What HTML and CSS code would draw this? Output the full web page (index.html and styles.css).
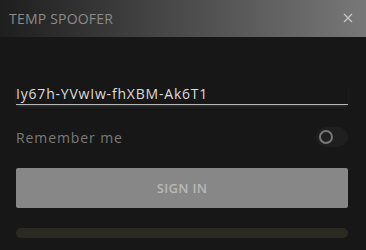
FILE: index.html
```html
<!DOCTYPE html>
<html>
<head>
<meta charset="utf-8">
<link rel="stylesheet" href="styles.css">
</head>
<body>
<div class="window">
  <div class="titlebar">
    <span class="title">TEMP SPOOFER</span>
    <svg class="close" width="10" height="10" viewBox="0 0 10 10"><path d="M1 1L9 9M9 1L1 9" stroke="#c4c4c4" stroke-width="1.4" fill="none"/></svg>
  </div>
  <div class="form">
    <div class="field">Iy67h-YVwIw-fhXBM-Ak6T1</div>
    <div class="remember">
      <span class="label">Remember me</span>
      <span class="toggle"><span class="knob"></span></span>
    </div>
    <div class="btn">SIGN IN</div>
    <div class="progress"></div>
  </div>
</div>
</body>
</html>
```
FILE: styles.css
```css
html, body { margin: 0; padding: 0; }
body {
  width: 366px; height: 250px; overflow: hidden;
  background: #171717;
  font-family: "Open Sans", "Lato", sans-serif;
}
.titlebar {
  height: 37px;
  display: flex; align-items: center; justify-content: space-between;
  padding: 0 13px 0 9px;
  background: linear-gradient(to right, #1e1e1e, #787878);
}
.title { color: #8a8a8a; font-size: 14px; font-weight: 500; letter-spacing: 0.2px; }
.close { display: block; margin-bottom: 2px; }
.form { padding: 47px 18px 0 16px; display: flex; flex-direction: column; }
.field {
  height: 20px; line-height: 20px;
  color: #dcdcdc; font-size: 14px; letter-spacing: 0.8px;
  border-bottom: 1px solid #b8b8b8;
  box-shadow: 0 2px 3px -1px rgba(255,255,255,0.15);
}
.remember {
  margin-top: 22px; height: 20px;
  display: flex; align-items: center; justify-content: space-between;
}
.label { color: #7a7a7a; font-size: 14px; font-weight: 500; letter-spacing: 0.9px; }
.toggle {
  width: 32px; height: 20px; border-radius: 10px;
  background: #1f1f1f; display: flex; align-items: center; padding-left: 3px; box-sizing: border-box;
}
.knob {
  width: 10px; height: 10px; border-radius: 50%;
  border: 2px solid #777; box-sizing: content-box;
}
.btn {
  margin-top: 21px; height: 40px; border-radius: 2px;
  background: #878787; color: #b8b8b8;
  display: flex; align-items: center; justify-content: center;
  font-size: 13px; font-weight: 600; letter-spacing: 0.3px;
}
.progress {
  margin-top: 20px; height: 10px; border-radius: 5px;
  background: #2a2a22;
}
```
